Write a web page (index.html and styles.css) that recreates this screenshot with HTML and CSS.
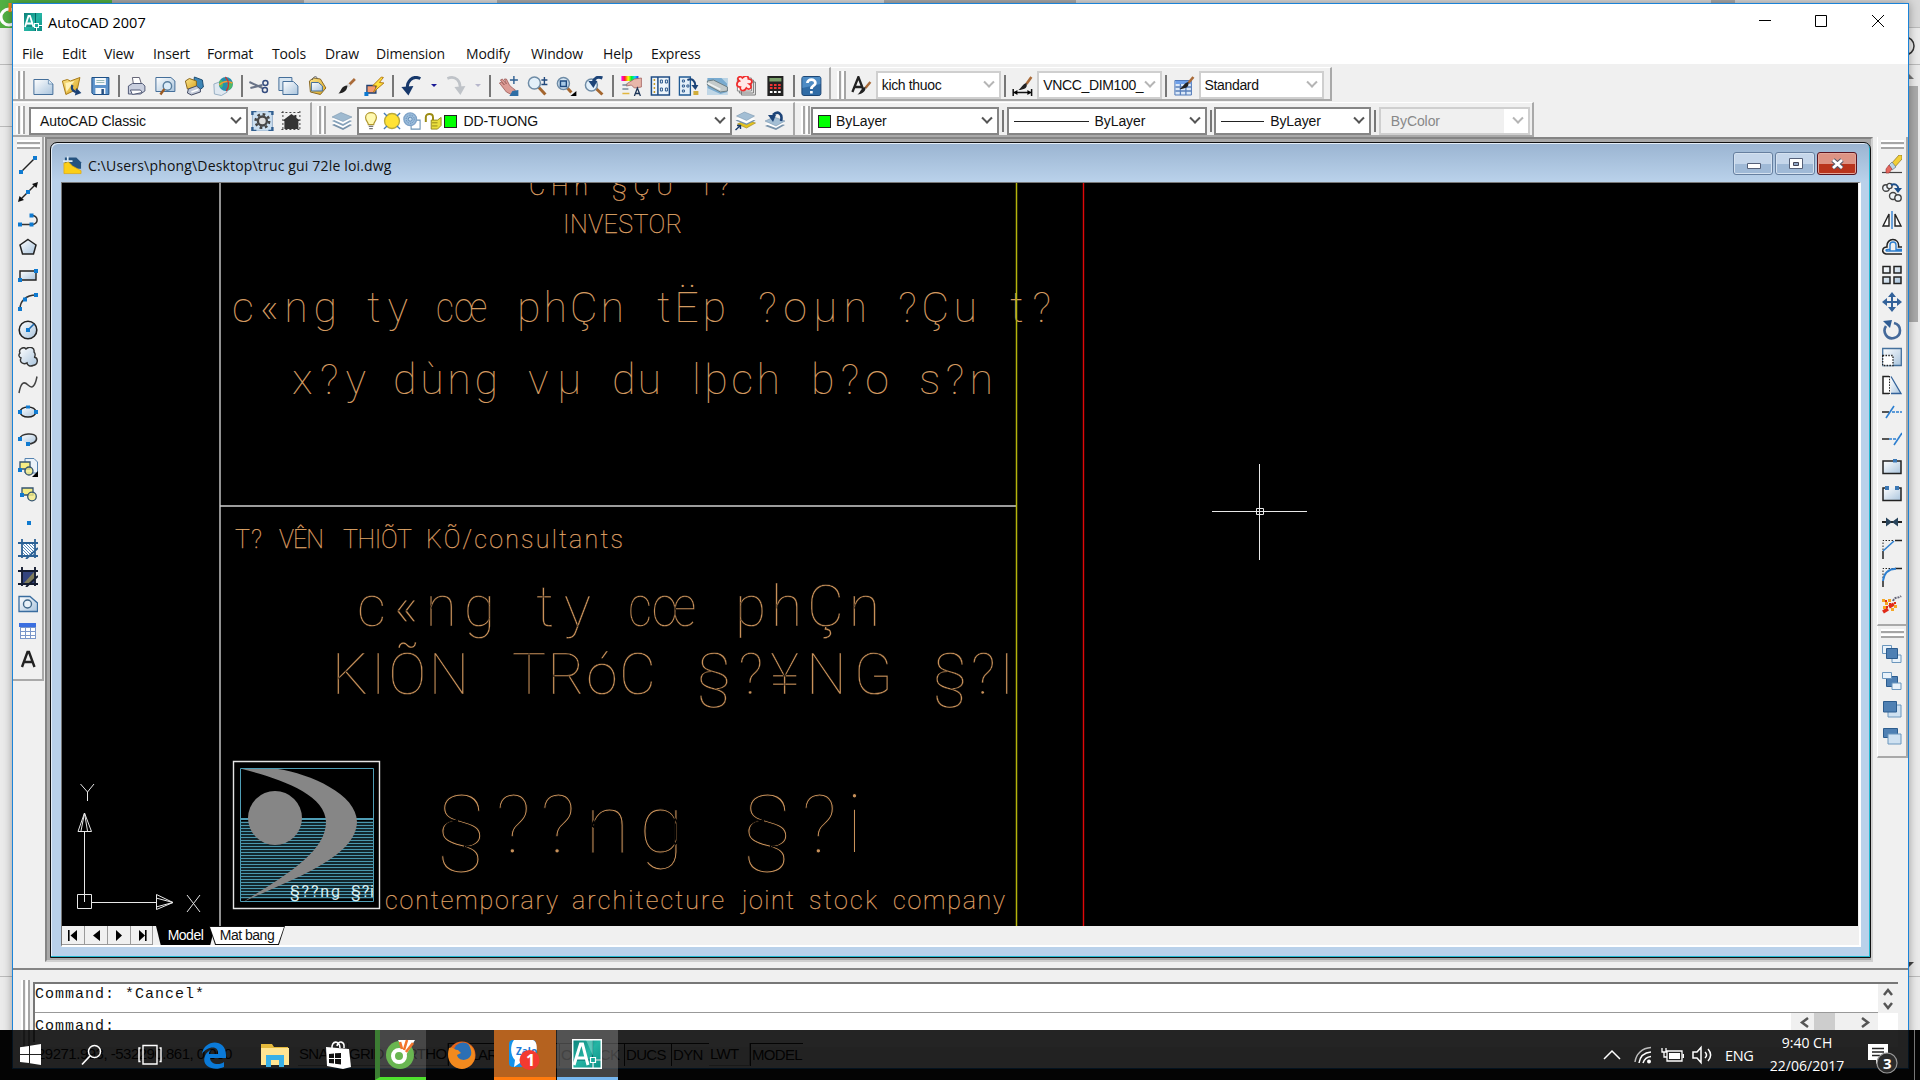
FILE: index.html
```html
<!DOCTYPE html>
<html lang="vi">
<head>
<meta charset="utf-8">
<title>AutoCAD 2007</title>
<link rel="stylesheet" href="styles.css">
</head>
<body>
<svg class="defs" aria-hidden="true">
<defs>
<linearGradient id="g-doc" x1="0" y1="0" x2="1" y2="1"><stop offset="0" stop-color="#fff"/><stop offset="1" stop-color="#a9c4dd"/></linearGradient>
<linearGradient id="g-gold" x1="0" y1="0" x2="1" y2="1"><stop offset="0" stop-color="#fbe48a"/><stop offset="1" stop-color="#d9a520"/></linearGradient>
<linearGradient id="g-teal" x1="0" y1="0" x2="1" y2="1"><stop offset="0" stop-color="#0b7f78"/><stop offset=".5" stop-color="#25b5a4"/><stop offset="1" stop-color="#0d8d84"/></linearGradient>
<linearGradient id="g-rain"><stop offset="0" stop-color="#f0f"/><stop offset=".2" stop-color="#f22"/><stop offset=".4" stop-color="#ff0"/><stop offset=".6" stop-color="#0e3"/><stop offset=".8" stop-color="#0df"/><stop offset="1" stop-color="#22f"/></linearGradient>
<pattern id="p-hatch" width="3" height="3" patternUnits="userSpaceOnUse"><path d="M0 0L3 3" stroke="#4a80b4" stroke-width=".9"/></pattern>
</defs>
<symbol id="acad" viewBox="0 0 18 18"><path fill="url(#g-teal)" d="M0 0h18v18H0z"/><path d="M11.500 0V18M0 13H18" stroke="#055" stroke-width=".8"/><path d="M1 14L4.500 3H6L9.500 14M2.500 10.500H8" fill="none" stroke="#fff" stroke-width="1.800"/><path fill="#1aa698" stroke="#fff" stroke-width="1.100" d="M10.500 10.500h4v4h-4zM14.500 12.500H18M12.500 14.500V18"/></symbol>
<symbol id="acad-big" viewBox="0 0 30 30"><path fill="url(#g-teal)" d="M0 0h30v30H0z"/><path d="M20.500 0V30M0 21H30" stroke="#066" stroke-width="1.200"/><path fill="#7ed8cc" opacity=".6" d="M14 1L21 1V17z"/><path d="M2 26L8.500 5H10.500L16 26M5 19H14" fill="none" stroke="#fff" stroke-width="3"/><path fill="#1aa698" stroke="#fff" stroke-width="1.200" d="M18.500 18.500h5v5h-5zM23.500 21H29M21 23.500V29"/><path fill="none" stroke="#fff" stroke-width="1.500" d="M.7 .7H29.300V29.300H.7z"/></symbol>
<symbol id="new" viewBox="0 0 20 20"><path fill="url(#g-doc)" stroke="#456f9a" d="M.5 3.500H15L19.500 8V18.500H.5z"/><path fill="#dceaf5" stroke="#456f9a" d="M15 3.500V8H19.500" stroke-width=".6"/></symbol>
<symbol id="open" viewBox="0 0 20 20"><path fill="url(#g-gold)" stroke="#a87a18" d="M1 5L6 3.500L9 5L18.500 1.500L16 13L4.500 18.500z"/><path fill="#fff2b8" d="M4 7L13 5L5 16z"/><path fill="none" stroke="#1c4275" stroke-width="2.200" d="M11 9C9 14 13 16 16 16"/><path fill="#1c4275" d="M15 12L20 17L13.500 19.500z"/></symbol>
<symbol id="save" viewBox="0 0 20 20"><path fill="#5c93cb" stroke="#1d4f86" d="M1.500 1.500H18.500V18.500H3L1.500 17z"/><path fill="#f4f8fb" d="M4.500 2H15.500V9H4.500z"/><path stroke="#9bb" d="M6 4.500H14M6 6.500H14"/><path fill="#f4f8fb" d="M5 12H15V18H5z"/><path fill="#234f83" d="M11 13H13.500V18H11z"/></symbol>
<symbol id="print" viewBox="0 0 20 20"><path fill="#fff" stroke="#667" d="M6 1.500H13L15 8H7z"/><path fill="#c9cfdf" stroke="#535b77" d="M2 10L6 7.500H16L18.500 10V15L14 18H2z"/><path fill="#fff" stroke="#535b77" d="M4 14H14L16 16.500L6 18.500z"/></symbol>
<symbol id="preview" viewBox="0 0 20 20"><path fill="url(#g-doc)" stroke="#456f9a" d="M.5 1.500H15.500L19.500 5V15.500H.5z"/><circle cx="12" cy="10" r="4.200" fill="#dcecf8" stroke="#5a7f9f" stroke-width="1.400"/><path d="M9 13L5 18.500" stroke="#9b5a22" stroke-width="2.400"/></symbol>
<symbol id="publish" viewBox="0 0 20 20"><path fill="#3d86b6" stroke="#1f4e75" d="M10 1L18 4L19 11L14 15L9 9z"/><path fill="url(#g-gold)" stroke="#8b671a" d="M1 5L5 2.500L12 5V11L3 13z"/><path fill="#c3cad9" stroke="#464e66" d="M4 13L12 10L16 13V16L7 19L3 17z"/><path stroke="#fff" stroke-width="1.400" d="M7 16L14 13.500"/></symbol>
<symbol id="web" viewBox="0 0 20 20"><path fill="#dfe8f1" stroke="#9ab0c4" d="M.5 8L6 6L14 16L8 19.500L1 18z"/><circle cx="12.500" cy="8" r="7" fill="#258fae"/><path fill="#4fba65" d="M7 4C10 4 11 9 8 12C5 10 5 6 7 4M14 8L19 6C20 11 17 14 14 14z"/><path fill="none" stroke="#f19b31" stroke-width="1.500" d="M6 9C10 5 15 5 19 7"/><path fill="none" stroke="#c33" stroke-width="1.300" d="M12 1C16 5 16 11 13 15"/></symbol>
<symbol id="cut" viewBox="0 0 20 20"><path stroke="#6a7488" stroke-width="2" d="M0 6L13 12M1 12L13 9"/><circle cx="16" cy="7" r="2.500" fill="none" stroke="#354c7e" stroke-width="1.500"/><circle cx="15.500" cy="14" r="2.500" fill="none" stroke="#354c7e" stroke-width="1.500"/></symbol>
<symbol id="copy" viewBox="0 0 20 20"><path fill="#d7e5f1" stroke="#456f9a" d="M.5 1.500H13.500V14.500H.5z"/><path fill="url(#g-doc)" stroke="#456f9a" d="M4.500 5.500H15L19.500 10V18.500H4.500z"/></symbol>
<symbol id="paste" viewBox="0 0 20 20"><path fill="url(#g-gold)" stroke="#8b6a25" d="M2 5L6 2L13 3L18.500 12L13 18.500L3 16z"/><path fill="none" stroke="#666" d="M5 4C6-.5 10 0 10 3"/><path fill="url(#g-doc)" stroke="#456f9a" d="M4 6.500H11L15 10V15H4z"/></symbol>
<symbol id="brush" viewBox="0 0 20 20"><path d="M18.500 3L12 9.500" stroke="#aa6b39" stroke-width="2.800"/><path d="M13 8L10.500 11" stroke="#ddd" stroke-width="3.200"/><path d="M11 9.500C11 14 8 17 2 17.500C5 15 5 9.500 11 9.500" fill="#222"/></symbol>
<symbol id="block" viewBox="0 0 20 20"><path fill="#f59a6e" stroke="#1d3f70" stroke-width="1.300" d="M2.500 9.500H11.500V17H2.500z"/><path fill="#ffe23c" stroke="#b77b14" d="M17 1L8.500 9.500L12.500 10L9 16L19.500 7L15 6.500L19 1.500z"/><path fill="#0a78d0" d="M0 16h4v4H0z"/></symbol>
<symbol id="undo" viewBox="0 0 20 20"><path d="M19 2.500C11-1 5 5 6 14" fill="none" stroke="currentColor" stroke-width="3"/><path fill="currentColor" d="M0 11L12 10L7 19.500z"/></symbol>
<symbol id="redo" viewBox="0 0 20 20"><path d="M1 2.500C9-1 15 5 13.500 14" fill="none" stroke="#bfc3c8" stroke-width="2.600"/><path fill="#bfc3c8" d="M8 11L19 10L14 19z"/></symbol>
<symbol id="pan" viewBox="0 0 20 20"><path fill="#dc9c95" stroke="#9d5a58" stroke-width=".8" d="M1 7L3 6L6 9L2 4L4 3L8 8L6 3L8 3L11 9L14 12L17 14L14 19L8 16z"/><path fill="#2f6ea5" d="M14 15L20 14V20H11z"/><path d="M15.500 0V8M11.500 4H19.500" stroke="#2b5d90" stroke-width="1.400"/></symbol>
<symbol id="zoomrt" viewBox="0 0 20 20"><path d="M11 11L18 18.500" stroke="#a4662f" stroke-width="3"/><circle cx="7" cy="7" r="6" fill="#e3f0fa" stroke="#6f8ca6" stroke-width="1.500"/><path d="M17 1V8M14 4H20M14 8.500H20" stroke="#234a7d" stroke-width="1.400"/></symbol>
<symbol id="zoomwin" viewBox="0 0 20 20"><path d="M10 11L15 16.500" stroke="#a4662f" stroke-width="3"/><circle cx="7" cy="7.500" r="6" fill="#d8e8f5" stroke="#6f8ca6" stroke-width="1.500"/><path fill="#a7c8e4" stroke="#1c4a80" stroke-width="1.500" d="M4 5H10V10.500H4z"/><path d="M20 15V20H14z"/></symbol>
<symbol id="zoomprev" viewBox="0 0 20 20"><path d="M10 11L18 18.500" stroke="#a4662f" stroke-width="3"/><circle cx="7" cy="9" r="6" fill="#e3f0fa" stroke="#6f8ca6" stroke-width="1.500"/><path d="M18 2C13 0 10 2 9 6" fill="none" stroke="#1d4478" stroke-width="3"/><path fill="#1d4478" d="M4 5L13 5L9 12z"/></symbol>
<symbol id="props" viewBox="0 0 20 20"><path fill="url(#g-rain)" d="M0 0h17v5H0z"/><path fill="#e8b7aa" stroke="#a2615d" stroke-width=".8" d="M5 8L13 3L20 2V11L13 12L10 9L5 10z"/><path stroke="#789" stroke-width="1.300" d="M1 9H6M1 13H7"/><path stroke="#e2b63f" stroke-width="1.600" d="M1 17.500H8"/><path d="M13 20L16 12L19 20M14 17.500H18" fill="none" stroke="#1d3557" stroke-width="1.300"/></symbol>
<symbol id="dc" viewBox="0 0 20 20"><path fill="#eef5fb" stroke="#1f4c84" stroke-width="1.500" d="M1 1H19V19H1zM7.500 1V19"/><path stroke="#c79a24" stroke-width="1.500" stroke-dasharray="2 2" d="M4 3V17"/><path fill="#fff" stroke="#2d5a8e" d="M10 4h2v3h-2zM15 4h2v3h-2zM10 12h2v3h-2zM15 12h2v3h-2z"/></symbol>
<symbol id="tool" viewBox="0 0 20 20"><path fill="#e4eff8" stroke="#1f5a94" stroke-width="1.300" d="M1 1H12V19H1z"/><path fill="#fff" stroke="#2d5a8e" d="M4 4h2v2H4zM4 9h2v2H4zM4 14h2v2H4zM8.500 9h2v2h-2z"/><path fill="none" stroke="#1d4478" stroke-width="2" d="M9 4C14 2 17 5 17 10"/><path fill="#1d4478" d="M13 9H20L17 14z"/><path fill="#d1ad3b" d="M15 15h5v4h-5z"/></symbol>
<symbol id="sheet" viewBox="0 0 20 20"><path fill="#79abd0" d="M0 2H20V19H0z"/><path fill="#b9d3e4" d="M0 2H14L20 8V2z"/><path fill="#c3caca" stroke="#6c7e84" d="M0 5L6 4L20 11V15L13 16L0 9z"/><path fill="none" stroke="#eef2f2" stroke-width="1.800" d="M0 7L13 13.500"/><path fill="#dfe9ef" d="M0 12L13 18L20 16V19H0z" opacity=".7"/></symbol>
<symbol id="markup" viewBox="0 0 20 20"><path fill="#eee" stroke="#777" d="M5 6H19V19H5zM3 4H17V17H3z"/><path fill="#fff" stroke="#888" d="M1 2H15V15H1z"/><path fill="#ffe8e8" stroke="#f12b2b" stroke-width="1.700" d="M3 5C-1 2 4-1 6 2C9-1 12-1 12 3C17 3 16 8 13 8C17 11 13 15 10 12C8 16 3 15 4 11C-1 11 0 6 3 5z"/></symbol>
<symbol id="calc" viewBox="0 0 20 20"><path fill="#222" d="M2 0H18V20H2z"/><path fill="#7ba16b" d="M4 2H16V5.500H4z"/><path stroke="#e33" stroke-width="2" stroke-dasharray="2.600 1.500" d="M4.500 9H16M4.500 12H16"/><path stroke="#fff" stroke-width="2" stroke-dasharray="2.600 1.500" d="M4.500 16H16"/></symbol>
<symbol id="help" viewBox="0 0 20 20"><rect x=".5" y=".5" width="19" height="19" rx="2" fill="#2f6ba5" stroke="#1d4674"/><path fill="#4d8bc4" d="M1 1H19V8L1 12z"/><path fill="none" stroke="#fff" stroke-width="2.700" d="M6 7C6 2.500 14 2.500 14 7C14 10 10 9.500 10 13M10 15V17.500"/></symbol>
<symbol id="tstyle" viewBox="0 0 20 20"><path d="M1 16L7 1L12 14M3 11H11" fill="none" stroke="#222" stroke-width="2.300"/><path d="M19 6L14 12" stroke="#aa6b39" stroke-width="2.500"/><path d="M14 11C15 15 11 18 6 18.500C9 17 9 12 14 11" fill="#222"/></symbol>
<symbol id="dstyle" viewBox="0 0 20 20"><path d="M19 1L14 8" stroke="#aa6b39" stroke-width="2.600"/><path d="M14 7C16 12 11 14 6 14C9 12 10 8 14 7" fill="#222"/><path d="M.8 13V20M19.200 13V20M1 16.500H19" stroke="#111" stroke-width="1.500"/><path d="M1 16.500L5 14V19zM19 16.500L15 14V19z"/></symbol>
<symbol id="tbstyle" viewBox="0 0 20 20"><path fill="#dbe8f8" stroke="#4f78b8" d="M.5 4.500H17V19H.5z"/><path fill="#6ea0ea" d="M1 5H17V8H1z"/><path fill="none" stroke="#5a80bb" stroke-width="1.300" d="M1 11H17M1 15H17M6 8V19M11.500 8V19"/><path d="M19 1L14 7" stroke="#aa6b39" stroke-width="2.600"/><path d="M14 6C15 11 11 13 5 13C9 11 9 7 14 6" fill="#222"/></symbol>
<symbol id="gear" viewBox="0 0 20 20"><path fill="#cbdff0" stroke="#7a9abb" stroke-width=".7" d="M0 0h20v20H0z"/><path d="M0 4V0H4M16 0H20V4M20 16V20H16M4 20H0V16" stroke="#315f90" stroke-width="2.400" fill="none"/><circle cx="10" cy="10" r="6.800" fill="none" stroke="#444" stroke-width="2.500" stroke-dasharray="2.700 2.640"/><circle cx="10" cy="10" r="4.500" fill="#ddd" stroke="#484848" stroke-width="2.400"/></symbol>
<symbol id="home" viewBox="0 0 20 20"><path fill="none" stroke="#444" stroke-dasharray="2 2" d="M1.500 0V20M18.500 0V20M0 1.500H20M0 18.500H20"/><path fill="#333" d="M2 9L10 3L13 5V4H15V7L18 9V10H17V18H3V10H2z"/></symbol>
<symbol id="layers" viewBox="0 0 20 20"><path fill="#7893ab" d="M0 14L9 10L20 14L11 19z"/><path fill="#fff" d="M0 12L9 8L20 12L11 17z"/><path fill="#86a2ba" d="M0 10L9 6L20 10L11 15z"/><path fill="#fff" d="M0 8L9 4L20 8L11 13z"/><path fill="#9fbad0" stroke="#6d8ba5" stroke-width=".5" d="M0 6L9 1.500L20 6L11 10.500z"/></symbol>
<symbol id="laycur" viewBox="0 0 20 20"><path fill="#e3c21f" stroke="#9a8218" stroke-width=".6" d="M2 13L11 9L20 12L11 17z"/><path fill="#7893ab" d="M0 9.500L9 6L20 9.500L11 14z"/><path fill="#fff" d="M0 8L9 4L20 8L11 12.500z"/><path fill="#a3bed4" stroke="#6d8ba5" stroke-width=".5" d="M1 5L9 1L19 5L11 9.500z"/><path d="M0 19L5 14.500M1.500 14.500H5V18" fill="none" stroke="#163a6b" stroke-width="1.400"/></symbol>
<symbol id="layprev" viewBox="0 0 20 20"><path fill="#7893ab" d="M0 15L9 11L20 14L11 19z"/><path fill="#fff" d="M0 13L9 9L20 12L11 17z"/><path fill="#a3bed4" stroke="#6d8ba5" stroke-width=".5" d="M0 10L9 6L20 10L11 15z"/><path d="M16 10C18 3 13-1 8 4" fill="none" stroke="#1d4478" stroke-width="2.600"/><path fill="#1d4478" d="M3 4H11L8 11z"/></symbol>
<symbol id="bulb" viewBox="0 0 20 20"><path fill="#fff9b0" stroke="#b0972e" stroke-width="1.300" d="M7 14C7 11 4 10 4 6C4-1 16-1 16 6C16 10 13 11 13 14z"/><path stroke="#777" stroke-width="1.600" d="M7.500 16H12.500M8 18.500H12"/></symbol>
<symbol id="sun" viewBox="0 0 20 20"><circle cx="10" cy="10" r="8.300" fill="#ffe235" stroke="#b9a93a" stroke-width="1.500"/><path d="M1 1l3.500 3.500M19 1l-3.500 3.500M1 19l3.500-3.500M19 19l-3.500-3.500" stroke="#467dba" stroke-width="1.500"/></symbol>
<symbol id="freeze" viewBox="0 0 20 20"><path fill="#fff" stroke="#6c94b5" stroke-width="1.200" d="M9 9H19V19H9z"/><circle cx="8" cy="8" r="7" fill="#9cbddb" stroke="#7fa3c8" stroke-width="1.500"/><circle cx="8" cy="8" r="4.500" fill="none" stroke="#5c87b2" stroke-dasharray="1.500 1.300"/><circle cx="8" cy="8" r="2.200" fill="#c6dcef" stroke="#5c87b2"/></symbol>
<symbol id="lock" viewBox="0 0 20 20"><path fill="none" stroke="#9c8b12" stroke-width="2.200" d="M2 11V6C2 1 10 1 10 6V9"/><path fill="#eadf3e" stroke="#8f8215" d="M8 9H15L19 6V15L15 19H8z"/><path stroke="#8f8215" d="M9 12H15M9 15.500H15"/></symbol>
<symbol id="dwg" viewBox="0 0 20 20"><path fill="#24527f" d="M2 2H14L19 7V14H2z"/><path fill="#fff" d="M5 1V11M0 6H10" stroke="#dbe9f5" stroke-width="1.800"/><path fill="#fbcf18" stroke="#e0a408" stroke-width=".7" d="M1 8L6 7L10 11L19 16V19H1z"/></symbol>

<symbol id="line" viewBox="0 0 20 20"><path d="M3 17L17 3" stroke="#222" stroke-width="1.500"/><path fill="#0f7ad0" d="M1 15h4v4H1zM15 1h4v4h-4z"/></symbol>
<symbol id="xline" viewBox="0 0 20 20"><path d="M2 18L18 2" stroke="#222" stroke-width="1.500"/><path fill="#111" d="M0 20L1.500 14L6 18zM20 0L18.500 6L14 2z"/><path fill="#0f7ad0" d="M8 8h4v4H8z"/></symbol>
<symbol id="pline" viewBox="0 0 20 20"><path d="M2 14.500H14M13 5.500C21 5 21 14.500 14 14.500" fill="none" stroke="#333" stroke-width="1.500"/><path fill="#0f7ad0" d="M0 12.500h4v4H0zM11.500 3.500h4v4h-4zM11.500 12.500h4v4h-4z"/></symbol>
<symbol id="polygon" viewBox="0 0 20 20"><path fill="url(#g-doc)" stroke="#222" stroke-width="1.500" d="M10 2.500L18 8L15.500 17H4.500L2 8z"/></symbol>
<symbol id="rect" viewBox="0 0 20 20"><path fill="url(#g-doc)" stroke="#222" stroke-width="1.400" d="M2 6H18V15H2z"/><path fill="#0f7ad0" d="M0 13h4v4H0zM16 4h4v4h-4z"/></symbol>
<symbol id="arc" viewBox="0 0 20 20"><path d="M2 17C2 9 8 3 18 3" fill="none" stroke="#333" stroke-width="1.600"/><path fill="#0f7ad0" d="M0 15h4v4H0zM5 5.500h4v4H5zM16 1h4v4h-4z"/></symbol>
<symbol id="circle" viewBox="0 0 20 20"><circle cx="10" cy="10" r="8.800" fill="url(#g-doc)" stroke="#222" stroke-width="1.600"/><path d="M10 10L16 4" stroke="#1a67ad" stroke-width="1.600"/><path fill="#0f7ad0" d="M8 8h4v4H8z"/></symbol>
<symbol id="cloud" viewBox="0 0 20 20"><path fill="url(#g-doc)" stroke="#333" stroke-width="1.400" d="M2 6C0 2 6-1 8 2C11-1 17 0 16 5C18 7 17 10 16 10C21 11 20 18 15 18.500C12 20 9 18 9 16C5 18 1 15 3 11C1 10 0 8 2 6z"/></symbol>
<symbol id="spline" viewBox="0 0 20 20"><path d="M1 18C3 7 6 6 10 10S17 12 19 1.500" fill="none" stroke="#444" stroke-width="1.500"/></symbol>
<symbol id="ellipse" viewBox="0 0 20 20"><ellipse cx="10" cy="10" rx="8" ry="5" fill="url(#g-doc)" stroke="#222" stroke-width="1.500"/><path fill="#0f7ad0" d="M0 8h4v4H0zM16 8h4v4h-4zM8 3.500h4v3H8z"/></symbol>
<symbol id="earc" viewBox="0 0 20 20"><path d="M2 10C2 4 18 3 18.500 9C19 13 14 15 10 15" fill="url(#g-doc)" stroke="#333" stroke-width="1.500"/><path fill="#0f7ad0" d="M0 8h4v4H0zM8 13h4v4H8z"/></symbol>
<symbol id="insblk" viewBox="0 0 20 20"><path fill="#eaf2f9" stroke="#5583b0" d="M7 1.500H16L19.500 5V16H7z"/><path fill="#f5ec83" stroke="#33536f" stroke-width="1.300" d="M2 5H12V12H2z"/><circle cx="11" cy="14" r="4" fill="#f5ec83" fill-opacity=".8" stroke="#33536f" stroke-width="1.300"/><path fill="#0f7ad0" d="M0 11h4v4H0z"/><path d="M20 14V20H14z"/></symbol>
<symbol id="mkblk" viewBox="0 0 20 20"><path fill="#f5ec83" stroke="#33536f" stroke-width="1.300" d="M4 4H15V11H4z"/><circle cx="14" cy="12.500" r="4.300" fill="#f5ec83" fill-opacity=".8" stroke="#33536f" stroke-width="1.300"/><path fill="#0f7ad0" d="M2 9h4v4H2z"/></symbol>
<symbol id="point" viewBox="0 0 20 20"><path fill="#0f7ad0" d="M9 9h4v4H9z"/></symbol>
<symbol id="hatch" viewBox="0 0 20 20"><path fill="#fff" d="M4 4H16V16H4z"/><path fill="url(#p-hatch)" d="M4 4H16V16H4z"/><path stroke="#2b6195" stroke-width="1.800" d="M4 0V19M17 0V19M0 4H20M0 17H20M8 20L20 9"/></symbol>
<symbol id="grad" viewBox="0 0 20 20"><path fill="#33447f" d="M4 4H16V16H4z"/><path fill="#b4a445" d="M16 5V12L12 16H6z" opacity=".6"/><path stroke="#141c30" stroke-width="1.900" d="M4 0V19M17 0V19M0 4H20M0 17H20M8 20L20 9"/></symbol>
<symbol id="region" viewBox="0 0 20 20"><path fill="url(#g-doc)" stroke="#3a6d9f" stroke-width="1.300" d="M1 2.500H12L19.500 9V17.500H1z"/><circle cx="9.500" cy="10" r="4" fill="#e8f1f8" stroke="#3f6688" stroke-width="1.400"/></symbol>
<symbol id="table" viewBox="0 0 20 20"><path fill="#7b97c9" d="M2 3H18V18H2z"/><path fill="#3b6fe0" d="M1 2H18V6H1z"/><path fill="#fff" d="M3 7h4v3H3zM8 7h4v3H8zM13 7h4v3h-4zM3 11h4v3H3zM8 11h4v3H8zM13 11h4v3h-4zM3 15h4v2H3zM8 15h4v2H8zM13 15h4v2h-4z"/></symbol>
<symbol id="mtext" viewBox="0 0 20 20"><path d="M4 18L9.500 3H11L16.500 18M6 13H14.500" fill="none" stroke="#222" stroke-width="2.400"/></symbol>

<symbol id="erase" viewBox="0 0 20 20"><path d="M0 17.500H20" stroke="#444" stroke-width="1.200"/><path fill="#f2cf37" stroke="#8a701a" stroke-width=".7" d="M9 9L17 0L20 0V4L12 13z"/><path fill="#bcd5e6" stroke="#567" stroke-width=".6" d="M7 10L10 7L14 12L10 15z"/><path fill="#e5665c" stroke="#933" stroke-width=".6" d="M4 14L7 10L10 14L7 18H4z"/></symbol>
<symbol id="copyo" viewBox="0 0 20 20"><g fill="#eef3f8" stroke="#444" stroke-width="1.400"><circle cx="4" cy="6" r="3.300"/><circle cx="7.500" cy="4" r="2.600"/><circle cx="11" cy="14" r="3.500"/><circle cx="16" cy="16" r="3.200"/></g><path d="M9 3C13 1 16 3 16.500 7" fill="none" stroke="#1c4f8a" stroke-width="2"/><path fill="#1c4f8a" d="M12 6H20L16 11z"/></symbol>
<symbol id="mirror" viewBox="0 0 20 20"><path fill="#fff" stroke="#222" stroke-width="1.400" d="M7 4V16H1zM13 4V16H19z"/><path stroke="#4a90d9" stroke-width="1.600" d="M10 1V19"/></symbol>
<symbol id="offset" viewBox="0 0 20 20"><path fill="none" stroke="#222" stroke-width="1.500" d="M20 17H4C-1 16 0 10 5 10C4 0 18 0 16.500 10H20"/><path fill="none" stroke="#2d7fd0" stroke-width="1.400" d="M20 14H4.500C3 13 5 12 8 12.500V8C8 4 14 4 14 8V12.500H20"/></symbol>
<symbol id="array" viewBox="0 0 20 20"><path fill="url(#g-doc)" stroke="#222" stroke-width="1.500" d="M1 1.500H8V8H1zM12 1.500H19V8H12zM1 12H8V18.500H1zM12 12H19V18.500H12z"/></symbol>
<symbol id="move" viewBox="0 0 20 20"><path stroke="#33629a" stroke-width="2" d="M10 3V17M3 10H17"/><path fill="#33629a" d="M10 0L14 5H6zM10 20L14 15H6zM0 10L5 6V14zM20 10L15 6V14z"/></symbol>
<symbol id="rotate" viewBox="0 0 20 20"><path fill="none" stroke="#44699a" stroke-width="2.600" d="M12 3C20 5 20 16 12 18C5 20 0 12 4 6"/><path fill="#2f5c93" d="M1 1L10 0L8 8z"/></symbol>
<symbol id="scale" viewBox="0 0 20 20"><path fill="url(#g-doc)" stroke="#44709c" stroke-width="1.300" d="M.7 1.500H19.300V18.500H.7z"/><path fill="#fff" stroke="#222" stroke-width="1.300" stroke-dasharray="1.500 1.300" d="M.7 8.500H11V18.500H.7z"/></symbol>
<symbol id="stretch" viewBox="0 0 20 20"><path fill="url(#g-doc)" stroke="#33629a" stroke-width="1.300" d="M9 1.500L19 18.500H9"/><path fill="#fff" stroke="#222" stroke-width="1.500" d="M7 1.500H1V18.500H7"/><path stroke="#222" stroke-dasharray="1.500 1.300" d="M7.500 1V19"/></symbol>
<symbol id="trim" viewBox="0 0 20 20"><path d="M0 10H7" stroke="#222" stroke-width="1.500"/><path d="M10 10H20" stroke="#2d7fd0" stroke-width="1.300" stroke-dasharray="3 1"/><path d="M4 16L12 4" stroke="#2d7fd0" stroke-width="1.600"/></symbol>
<symbol id="extend" viewBox="0 0 20 20"><path d="M0 10H7" stroke="#222" stroke-width="1.500"/><path d="M7 10H14" stroke="#2d7fd0" stroke-width="1.300" stroke-dasharray="3 1"/><path d="M12 16L20 4" stroke="#2d7fd0" stroke-width="1.600"/></symbol>
<symbol id="brkpt" viewBox="0 0 20 20"><path fill="url(#g-doc)" stroke="#222" stroke-width="1.500" d="M1 4H19V16.500H1z"/><path fill="#3a77b4" d="M11 2h4v3.500h-4z"/></symbol>
<symbol id="brk" viewBox="0 0 20 20"><path fill="url(#g-doc)" d="M1 4H19V16.500H1z"/><path fill="none" stroke="#222" stroke-width="1.500" d="M5 4H1V16.500H19V4H16"/><path fill="#3a77b4" d="M3 2h4v4H3zM13 2h4v4h-4z"/></symbol>
<symbol id="join" viewBox="0 0 20 20"><path d="M0 10H20" stroke="#222" stroke-width="2"/><path fill="#28445c" d="M10 10L4 5.500V14.500zM10 10L16 5.500V14.500z"/></symbol>
<symbol id="chamfer" viewBox="0 0 20 20"><path d="M1 20V12M13 1.500H20" stroke="#222" stroke-width="1.500"/><path d="M1 11V1.500H12" fill="none" stroke="#222" stroke-dasharray="1.500 1.500"/><path d="M1 12L12 2" stroke="#2d7fd0" stroke-width="1.600"/></symbol>
<symbol id="fillet" viewBox="0 0 20 20"><path d="M1 20V14M13 1.500H20" stroke="#222" stroke-width="1.500"/><path d="M1 11V1.500H12" fill="none" stroke="#222" stroke-dasharray="1.500 1.500"/><path d="M1 14C2 6 6 2 14 1.800" fill="none" stroke="#2d7fd0" stroke-width="1.900"/></symbol>
<symbol id="explode" viewBox="0 0 20 20"><path d="M11 7C13 2 16 5 19 2" stroke="#667" stroke-dasharray="2 1" fill="none" stroke-width="2"/><path d="M1 18L6 15" stroke="#e02a18" stroke-width="3.500"/><path d="M7 13L12 10" stroke="#e02a18" stroke-width="3.500"/><path d="M0 5h3v3H0zM6 5h3v3H6zM3 8h3v3H3zM1 12h3v3H1zM9 14h3v3H9zM12 11h3v3h-3z" fill="#f5a623"/><path d="M3 6h2v2H3zM7 9h2v2H7zM4 12h2v2H4zM12 8h2v2h-2z" fill="#e02a18"/></symbol>
<symbol id="front" viewBox="0 0 20 20"><path fill="#e9f2fa" stroke="#6b96bd" d="M.5 1.500h9v8h-9zM10 11h9v7.500h-9z"/><path fill="#4f80b3" stroke="#2c5c8e" d="M4.500 4.500h11v10h-11z"/></symbol>
<symbol id="back" viewBox="0 0 20 20"><path fill="#4f80b3" stroke="#2c5c8e" d="M4.500 5.500h11v10h-11z"/><path fill="#e9f2fa" stroke="#6b96bd" d="M.5 1.500h9v6h-9zM10 12h9v6.500h-9z"/></symbol>
<symbol id="above" viewBox="0 0 20 20"><path fill="#cfe1f1" stroke="#6b96bd" d="M6 6h13v12H6z"/><path fill="#4f80b3" stroke="#2c5c8e" d="M1.500 2.500h13v10.500h-13z"/></symbol>
<symbol id="under" viewBox="0 0 20 20"><path fill="#4f80b3" stroke="#2c5c8e" d="M1.500 2.500h14v9h-14z"/><path fill="#cfe1f1" stroke="#6b96bd" d="M6 8h13v10H6z"/></symbol>
</svg>

<div class="backdrop">
  <div class="back-tab"></div>
  <svg class="back-bits" width="1920" height="1080">
    <path fill="#aaa" d="M112 0H304V3H112zM497 0H690V3H497zM884 0H1076V3H884zM1711 0H1735V3H1711z"/>
    <circle cx="9" cy="17" r="8" fill="none" stroke="#fff" stroke-width="3"/><path d="M10 3V12" stroke="#f58220" stroke-width="3"/>
    <path stroke="#bbb" d="M0 64.500H12M1909 27.500H1920M1909 64.500H1920M0 126.500H12M0 976.500H12M1909 976.500H1920"/>
    <circle cx="1905" cy="46" r="9" fill="none" stroke="#333" stroke-width="1.500"/>
    <path fill="#777" d="M1909 74L1914 79H1909z"/><path fill="#aaa" d="M1909 86H1918V322H1909z"/><path fill="#444" d="M1909 962H1914L1909 967z"/>
  </svg>
</div>

<main class="window">
  <header class="titlebar">
    <svg class="app-icon"><use href="#acad"/></svg><span class="app-title">AutoCAD 2007</span>
    <svg class="caption" width="126" height="14"><path fill="none" stroke="#000" d="M0 5.500H12M56.500 .5H67.500V11.500H56.500zM113 0L125 12M125 0L113 12"/></svg>
  </header>
  <nav class="menubar"><span>File</span><span>Edit</span><span>View</span><span>Insert</span><span>Format</span><span>Tools</span><span>Draw</span><span>Dimension</span><span>Modify</span><span>Window</span><span>Help</span><span>Express</span></nav>

  <div class="toolrow row-one">
    <section class="bar bar-standard">
      <i class="grip"></i>
      <svg class="ic"><use href="#new"/></svg><svg class="ic"><use href="#open"/></svg><svg class="ic"><use href="#save"/></svg><i class="sep"></i>
      <svg class="ic"><use href="#print"/></svg><svg class="ic"><use href="#preview"/></svg><svg class="ic"><use href="#publish"/></svg><svg class="ic"><use href="#web"/></svg><i class="sep"></i>
      <svg class="ic"><use href="#cut"/></svg><svg class="ic"><use href="#copy"/></svg><svg class="ic"><use href="#paste"/></svg><svg class="ic"><use href="#brush"/></svg><svg class="ic"><use href="#block"/></svg><i class="sep"></i>
      <svg class="ic navy"><use href="#undo"/></svg><i class="drop"></i><svg class="ic"><use href="#redo"/></svg><i class="drop off"></i><i class="sep"></i>
      <svg class="ic"><use href="#pan"/></svg><svg class="ic"><use href="#zoomrt"/></svg><svg class="ic"><use href="#zoomwin"/></svg><svg class="ic"><use href="#zoomprev"/></svg><i class="sep"></i>
      <svg class="ic"><use href="#props"/></svg><svg class="ic"><use href="#dc"/></svg><svg class="ic"><use href="#tool"/></svg><svg class="ic"><use href="#sheet"/></svg><svg class="ic"><use href="#markup"/></svg><svg class="ic"><use href="#calc"/></svg><i class="sep"></i>
      <svg class="ic"><use href="#help"/></svg>
    </section>
    <section class="bar bar-styles">
      <i class="grip"></i>
      <svg class="ic"><use href="#tstyle"/></svg><div class="combo pale"><span>kich thuoc</span><i class="chev"></i></div><i class="sep"></i>
      <svg class="ic"><use href="#dstyle"/></svg><div class="combo pale"><span>VNCC_DIM100_</span><i class="chev"></i></div><i class="sep"></i>
      <svg class="ic"><use href="#tbstyle"/></svg><div class="combo pale"><span>Standard</span><i class="chev"></i></div>
    </section>
  </div>
  <div class="toolrow row-two">
    <section class="bar bar-workspace">
      <i class="grip"></i><div class="combo"><span>AutoCAD Classic</span><i class="chev"></i></div>
      <svg class="ic"><use href="#gear"/></svg><svg class="ic"><use href="#home"/></svg>
    </section>
    <section class="bar bar-layers">
      <i class="grip"></i><svg class="ic"><use href="#layers"/></svg>
      <div class="combo"><svg class="mini"><use href="#bulb"/></svg><svg class="mini"><use href="#sun"/></svg><svg class="mini"><use href="#freeze"/></svg><svg class="mini"><use href="#lock"/></svg><b class="swatch"></b><span>DD-TUONG</span><i class="chev"></i></div>
      <svg class="ic"><use href="#laycur"/></svg><svg class="ic"><use href="#layprev"/></svg>
    </section>
    <section class="bar bar-props">
      <i class="grip"></i>
      <div class="combo c-color"><b class="swatch"></b><span>ByLayer</span><i class="chev"></i></div><i class="sep"></i>
      <div class="combo c-type"><b class="rule"></b><span>ByLayer</span><i class="chev"></i></div><i class="sep"></i>
      <div class="combo c-weight"><b class="rule"></b><span>ByLayer</span><i class="chev"></i></div><i class="sep"></i>
      <div class="combo c-plot pale"><span>ByColor</span><i class="chev"></i></div>
    </section>
  </div>

  <div class="workarea">
    <aside class="side side-left">
      <i class="hgrip"></i>
      <svg><use href="#line"/></svg><svg><use href="#xline"/></svg><svg><use href="#pline"/></svg><svg><use href="#polygon"/></svg><svg><use href="#rect"/></svg><svg><use href="#arc"/></svg><svg><use href="#circle"/></svg><svg><use href="#cloud"/></svg><svg><use href="#spline"/></svg><svg><use href="#ellipse"/></svg><svg><use href="#earc"/></svg><svg><use href="#insblk"/></svg><svg><use href="#mkblk"/></svg><svg><use href="#point"/></svg><svg><use href="#hatch"/></svg><svg><use href="#grad"/></svg><svg><use href="#region"/></svg><svg><use href="#table"/></svg><svg><use href="#mtext"/></svg>
    </aside>
    <div class="mdi">
      <div class="doc">
        <div class="doc-title">
          <svg class="doc-icon"><use href="#dwg"/></svg><span>C:\Users\phong\Desktop\truc gui 72le loi.dwg</span>
          <div class="doc-buttons">
            <svg width="40" height="23"><path class="glyph" d="M13.500 10.500h13v5h-13z"/></svg>
            <svg width="40" height="23"><path class="glyph" d="M13.500 5.500h13v10h-13z"/><path fill="#8fa6c4" stroke="#445" d="M17.500 9.500h5v3h-5z"/></svg>
            <svg class="close" width="40" height="23"><path d="M15 7L24 15M24 7L15 15" stroke="#555a6a" stroke-width="5"/><path d="M15 7L24 15M24 7L15 15" stroke="#fff" stroke-width="2.800"/></svg>
          </div>
        </div>
        <div class="doc-body">
          <svg class="drawing" width="1796" height="743" viewBox="62 183 1796 743">
            <path fill="none" stroke="#cfcfcf" stroke-width="1.400" d="M220 183V926M220 506H1016"/>
            <path stroke="#e00808" stroke-width="1.400" d="M1083.500 183V926"/>
            <g class="cad s25">
              <text x="529" y="194.500" textLength="59">CHñ</text><text x="612" y="194.500" textLength="61">§ÇU</text><text x="699" y="194.500" textLength="30">T?</text>
              <text x="563" y="233" textLength="119">INVESTOR</text>
              <text x="235" y="548" textLength="27">T?</text><text x="279" y="548" textLength="45">VÊN</text><text x="343" y="548" textLength="69">THIÕT</text><text x="426" y="548" textLength="197">KÕ/consultants</text>
              <text x="385" y="909" textLength="173">contemporary</text><text x="572" y="909" textLength="152">architecture</text><text x="742" y="909" textLength="52">joint</text><text x="809" y="909" textLength="68">stock</text><text x="893" y="909" textLength="112">company</text>
            </g>
            <g class="cad s44">
              <text x="232" y="322" textLength="105">c«ng</text><text x="367" y="322" textLength="41">ty</text><text x="436" y="322" textLength="51" lengthAdjust="spacingAndGlyphs">cœ</text><text x="517" y="322" textLength="107">phÇn</text><text x="657" y="322" textLength="69">tËp</text><text x="758" y="322" textLength="109">?oµn</text><text x="898" y="322" textLength="79">?Çu</text><text x="1010" y="322" textLength="41">t?</text>
              <text x="292" y="394" textLength="74">x?y</text><text x="393" y="394" textLength="105">dùng</text><text x="528" y="394" textLength="53">vµ</text><text x="612" y="394" textLength="49">du</text><text x="692" y="394" textLength="88">lþch</text><text x="811" y="394" textLength="78">b?o</text><text x="919" y="394" textLength="74">s?n</text>
            </g>
            <g class="cad s58">
              <text x="357" y="625.500" textLength="138">c«ng</text><text x="536" y="625.500" textLength="55">ty</text><text x="628" y="625.500" textLength="68" lengthAdjust="spacingAndGlyphs">cœ</text><text x="735" y="625.500" textLength="145">phÇn</text>
              <text x="332" y="694" textLength="137">KIÕN</text><text x="512" y="694" textLength="144">TRóC</text><text x="697" y="694" textLength="196">§?¥NG</text><text x="933" y="694" textLength="81">§?I</text>
            </g>
            <g class="cad s82">
              <text x="437" y="853" textLength="247">§??ng</text><text x="743" y="853" textLength="120">§?i</text>
            </g>
            <path stroke="#b4b40c" stroke-width="1.500" d="M1016.500 183V926"/>
            <g fill="none" stroke="#e4e4e4">
              <path stroke-width="1.400" d="M233.500 761.500H379.500V908.500H233.500z"/>
              <path stroke="#4f9db5" d="M240.500 768.500H373.500V901.500H240.500z"/>
              <path stroke="#4f9db5" stroke-width="2" d="M240 819H374"/>
              <path stroke="#4a97ae" stroke-width="1.300" d="M240 822.500H374M240 825.500H374M240 828.500H374M240 831.500H374M240 834.500H374M240 837.500H374M240 840.500H374M240 843.500H374M240 846.500H374M240 849.500H374M240 852.500H374M240 855.500H374M240 858.500H374M240 861.500H374M240 864.500H374M240 867.500H374M240 870.500H374M240 873.500H374M240 876.500H374M240 879.500H374M240 882.500H374M240 885.500H374M240 888.500H374M240 891.500H374M240 894.500H374M240 897.500H374"/>
            </g>
            <circle cx="275" cy="818" r="27" fill="#868686"/>
            <path fill="#868686" d="M242 769H278C310 774 357 794 357 822C356 858 290 880 243 902C285 876 326 852 326 822C326 794 278 778 242 769z"/>
            <g class="cad logo-text"><text x="290" y="897" textLength="50">§??ng</text><text x="351" y="897" textLength="23">§?i</text></g>
            <g fill="none" stroke="#e8e8e8">
              <path d="M77.500 894.500H91.500V908.500H77.500zM84.500 902V831M78 831.500H91.500L84.500 813zM81 831L84.500 813L87.500 831M91 902.500H156M156.500 894.500V909.500L173 902.500zM156 898L173 902.500L156 907"/>
              <path d="M80.500 784L87.500 792L94 784M87.500 792V801M187 895L200 912M200 895L187 912"/>
              <path d="M1212 511.500H1307M1259.500 464V560M1256.500 508.500H1263.500V514.500H1256.500z"/>
            </g>
          </svg>
          <div class="tabs">
            <svg width="91" height="19"><path fill="none" stroke="#9a9a9a" d="M22.500 0V19M45.500 0V19M68.500 0V19M90.500 0V19M0 18.500H91"/><path d="M6 4h1.600v11H6zM15 4V15L8.500 9.500zM38 4V15L31 9.500zM54 4V15L60 9.500zM77 4V15L83 9.500zM83 4h1.600v11H83z"/></svg>
            <div class="tab active"><span>Model</span></div><div class="tab"><span>Mat bang</span></div>
          </div>
        </div>
      </div>
    </div>
    <aside class="side side-right">
      <div class="group">
        <i class="hgrip"></i>
        <svg><use href="#erase"/></svg><svg><use href="#copyo"/></svg><svg><use href="#mirror"/></svg><svg><use href="#offset"/></svg><svg><use href="#array"/></svg><svg><use href="#move"/></svg><svg><use href="#rotate"/></svg><svg><use href="#scale"/></svg><svg><use href="#stretch"/></svg><svg><use href="#trim"/></svg><svg><use href="#extend"/></svg><svg><use href="#brkpt"/></svg><svg><use href="#brk"/></svg><svg><use href="#join"/></svg><svg><use href="#chamfer"/></svg><svg><use href="#fillet"/></svg><svg><use href="#explode"/></svg>
      </div>
      <div class="group">
        <i class="hgrip"></i>
        <svg><use href="#front"/></svg><svg><use href="#back"/></svg><svg><use href="#above"/></svg><svg><use href="#under"/></svg>
      </div>
    </aside>
  </div>

  <div class="command">
    <i class="grip"></i>
    <div class="cmd-box">
      <div class="cmd-history"><span>Command: *Cancel*</span><svg width="20" height="29"><path fill="none" stroke="#555" stroke-width="2.500" d="M6 11L10 6L14 11M6 19L10 24L14 19"/></svg></div>
      <div class="cmd-line"><span>Command:</span><svg width="87" height="17"><path fill="#cdcdcd" d="M23 0H44V17H23z"/><path fill="none" stroke="#555" stroke-width="2.500" d="M17 5L11 9.500L17 14M71 5L77 9.500L71 14"/></svg></div>
    </div>
  </div>
  <footer class="statusbar"><span class="coords">29271.993, -532290.861, 0.000</span><span class="w49 up">SNAP</span><span class="w47 up">GRID</span><span class="w52 up">ORTHO</span><span class="w52">POLAR</span><span class="w58">OSNAP</span><span class="w65">OTRACK</span><span class="w47">DUCS</span><span class="w37">DYN</span><span class="w41 up">LWT</span><span class="w53">MODEL</span></footer>
</main>

<div class="taskbar">
  <div class="task"><svg width="22" height="22"><path fill="#fff" d="M0 3.200L9 2V10H0zM10 1.800L21 0V10H10zM0 11H9V19L0 18zM10 11H21V21L10 19.300z"/></svg></div>
  <div class="task"><svg width="22" height="22"><circle cx="13.500" cy="7.500" r="6" fill="none" stroke="#fff" stroke-width="1.500"/><path d="M9 12L1 20.500" stroke="#fff" stroke-width="1.700"/></svg></div>
  <div class="task tview"><svg width="24" height="22"><path fill="none" stroke="#fff" stroke-width="1.400" d="M5 1.500H19V20H5zM2.500 4H1V17.500H2.500M21.500 4H23V17.500H21.500"/></svg></div>
  <div class="task"><svg width="26" height="27"><path fill="#0b7ad8" d="M1 12C3-3 25-4 25 13V16H9C9 22 18 24 23 20V25C12 30 0 24 4 14C6 9 10 8 10 8C8 9 8 11 8 12H17C18 3 6 4 1 12z"/></svg></div>
  <div class="task"><svg width="28" height="26"><path fill="#e5b93c" d="M0 2H11L13 5H27V23H0z"/><path fill="#ffe593" d="M0 6H28V23H0z"/><path fill="#38b0e8" d="M5 13H23V25H18V18H10V25H5z"/></svg></div>
  <div class="task store"><svg width="28" height="30"><path fill="none" stroke="#fff" stroke-width="1.600" d="M7 9C6 0 15 0 15 8M12 6C13 0 20 1 19 8"/><path fill="#fff" d="M1 7L24 9L26 27L18 29L2 26z"/><path fill="#111" d="M4 14L9 13.500V18H4zM10 13.300L16 13V18H10zM4 19H9V23.500L4 23zM10 19H16V24.500L10 23.700z"/></svg></div>
  <div class="task open coc"><svg width="30" height="30"><circle cx="14" cy="16" r="14" fill="#69b651"/><circle cx="13" cy="17" r="6" fill="none" stroke="#fff" stroke-width="4"/><path fill="#fff" d="M12 1H29L20 16z"/><path d="M14 3L16 10M21 1L18 11M27 4L20 13" stroke="#f2742b" stroke-width="2.600"/></svg></div>
  <div class="task"><svg width="28" height="28"><circle cx="14" cy="14" r="13.500" fill="#e8641b"/><circle cx="15" cy="11" r="9.500" fill="#2b6fb5"/><path fill="#f28a1e" d="M1 7C5 5 6 9 10 9L13 12L9 14C10 20 20 21 23 14C24 10 22 5 20 3C30 8 30 26 14 28C2 27-2 17 1 7z"/></svg></div>
  <div class="task open zalo"><svg width="34" height="32"><rect x="1" y="2" width="27" height="27" rx="4" fill="#1392ea"/><path fill="#fff" d="M6 2H25C30 4 29 12 28 18C26 25 18 26 12 25L6 29L7 22C2 17 2 7 6 2z"/><text x="8" y="17" font-size="10" font-weight="bold" fill="#1a78d6">Zalo</text><circle cx="21.500" cy="22" r="10" fill="#f33a30"/><text x="18" y="28" font-size="16" font-weight="bold" fill="#fff">1</text></svg></div>
  <div class="task open cad-task"><svg width="30" height="30"><use href="#acad-big"/></svg></div>
  <div class="tray">
    <svg width="110" height="22"><g fill="none" stroke="#fff" stroke-width="1.500"><path d="M1 15L9 7L17 15"/><path d="M32 18C33 10 39 4 48 3.500" opacity=".7"/><path d="M36 19C37 13 41 8.500 48 8M40 19C41 16 43.500 13 48 12.500"/><path d="M90 8H94L98 3.500V18.500L94 14H90zM102 8C104 10 104 12 102 14M105 5C108.500 9 108.500 13 105 17"/><path d="M64 7H79V17H64zM59 4V8H63V4M61 8V13H64" stroke-width="1.300"/></g><path fill="#fff" d="M66 9H77V15H66zM79.500 10H81V14H79.500z"/><circle cx="46" cy="17.500" r="2" fill="#fff"/></svg>
    <span class="lang">ENG</span>
    <div class="clock"><span>9:40 CH</span><span>22/06/2017</span></div>
    <svg class="notes" width="32" height="34"><path fill="#fff" d="M1 2H21V18H14L9 22V18H1z"/><path stroke="#222" stroke-width="1.400" d="M5 6.500H17M5 10H17M5 13.500H13"/><circle cx="20" cy="21" r="10" fill="#2c2c2c" stroke="#999" stroke-width="1.200"/><text x="16" y="26.500" font-size="15" font-weight="bold" fill="#fff">3</text></svg>
    <i class="peek"></i>
  </div>
</div>
</body>
</html>
```
FILE: styles.css
```css
* { box-sizing: border-box; }
html, body { margin: 0; width: 1920px; height: 1080px; overflow: hidden; }
body { position: relative; font-family: "Open Sans", "Noto Sans", sans-serif; color: #111; }
i { font-style: normal; }
.defs { position: absolute; width: 0; height: 0; }

.backdrop { position: absolute; inset: 0; background: linear-gradient(#d9d9d9 0 28px, #ebebeb 28px 1030px, #222 1030px); }
.back-tab { width: 112px; height: 28px; background: #52b043; }
.back-bits { position: absolute; inset: 0; }

.window { position: absolute; left: 12px; top: 3px; width: 1897px; height: 1066px; border: 1px solid #1b83d8; background: #f0f0f0; display: flex; flex-direction: column; box-shadow: 0 0 9px rgba(0,0,0,.35); }
.titlebar { height: 35px; background: #fff; display: flex; align-items: center; padding: 1px 24px 0 11px; flex: none; }
.app-icon { width: 18px; height: 18px; }
.app-title { font-size: 14.500px; margin-left: 6px; color: #000; }
.caption { margin-left: auto; margin-right: -1px; }
.menubar { height: 25px; background: #fff; display: flex; flex: none; padding-left: 9px; font-size: 14px; line-height: 30px; letter-spacing: -.15px; white-space: nowrap; }
.menubar span:nth-child(1) { width: 40px; }
.menubar span:nth-child(2) { width: 42px; }
.menubar span:nth-child(3) { width: 49px; }
.menubar span:nth-child(4) { width: 54px; }
.menubar span:nth-child(5) { width: 65px; }
.menubar span:nth-child(6) { width: 53px; }
.menubar span:nth-child(7) { width: 51px; }
.menubar span:nth-child(8) { width: 90px; }
.menubar span:nth-child(9) { width: 65px; }
.menubar span:nth-child(10) { width: 72px; }
.menubar span:nth-child(11) { width: 48px; }

.toolrow { display: flex; flex: none; height: 35px; }
.row-one { margin-top: 3px; }
.bar { height: 34px; display: flex; align-items: center; border-top: 1px solid #fff; border-bottom: 2px solid #a9a9a9; border-right: 2px solid #a9a9a9; font-family: "Liberation Sans", sans-serif; font-size: 14px; letter-spacing: -.1px; padding-top: 4px; }
.row-two .bar { height: 35px; }
.bar-standard { width: 818px; padding-left: 3px; }
.bar-styles { width: 501px; padding-left: 6px; }
.bar-workspace { width: 299px; padding-left: 3px; }
.bar-layers { width: 483px; padding-left: 5px; }
.bar-props { width: 739px; padding-left: 6px; }
.grip { width: 9px; height: 28px; flex: none; border: solid #a5a5a5; border-width: 0 2px 0 0; background: linear-gradient(90deg, #fff 0 2px, #a5a5a5 2px 4px, #f0f0f0 4px 5px, #fff 5px); margin-top: -2px; }
.ic { width: 28.800px; height: 20px; flex: none; }
.bar-standard .grip { margin-right: 3.500px; }
.navy { color: #17386b; }
.sep { width: 7.600px; height: 22px; flex: none; background: linear-gradient(90deg, transparent 3px, #777 3px 5px, transparent 5px); }
.drop { width: 16px; flex: none; display: flex; justify-content: center; }
.drop::before { content: ""; border: 3.500px solid transparent; border-top-color: #1a1a96; border-bottom: 0; }
.drop.off::before { border-top-color: #b7b7cc; }

.combo { height: 28px; flex: none; background: #fff; border: 2px solid #858585; display: flex; align-items: center; padding-left: 10px; white-space: nowrap; }
.combo.pale { border-color: #cfcfcf; }
.chev { margin-left: auto; flex: none; width: 8px; height: 8px; border: solid #555; border-width: 0 2px 2px 0; transform: rotate(45deg) translate(-2px, -2px); margin-right: 6px; }
.pale .chev { border-color: #b5b5b5; }
.bar-styles .grip { margin-right: 1px; }
.bar-styles .combo { width: 125px; padding-left: 4px; margin-top: -1px; }
.bar-styles .combo span { letter-spacing: -.35px; }
.bar-workspace .combo { width: 219px; margin: 0 0 0 4px; padding-left: 9px; }
.bar-layers .ic { margin-left: 2px; width: 28px; }
.bar-layers .combo { width: 375px; padding-left: 3px; gap: 2.500px; margin-left: 1px; }
.bar-layers .combo + .ic { margin-left: 0; width: 27px; }
.bar-layers .combo span { margin-left: 4px; }
.mini { width: 18px; height: 18px; flex: none; }
.swatch { width: 13px; height: 13px; background: #0f0; border: 1px solid #222; flex: none; }
.c-color { width: 188px; margin-left: 1px; padding-left: 5px; gap: 5px; }
.c-type { width: 200px; padding-left: 5px; gap: 6px; }
.c-weight { width: 157px; padding-left: 5px; gap: 6px; }
.c-plot { width: 151px; background: linear-gradient(90deg, #f0f0f0 123px, #fff 123px); color: #888; }
.rule { height: 1px; background: #222; }
.c-type .rule { width: 75px; }
.c-weight .rule { width: 43px; }

.workarea { display: flex; height: 826px; flex: none; }
.side svg { display: block; width: 20px; height: 20px; margin-bottom: 7.450px; }
.hgrip { display: block; height: 9px; border: solid #a5a5a5; border-width: 0 0 2px; background: linear-gradient(#fff 0 2px, #a5a5a5 2px 4px, #f0f0f0 4px 5px, #fff 5px); }
.side-left { width: 31px; height: 544px; padding: 3px 2px 0 4px; border-right: 2px solid #a9a9a9; border-bottom: 2px solid #a9a9a9; }
.side-left svg { margin-left: 1px; }
.side-left .hgrip, .side-right .hgrip { margin-bottom: 6px; }
.side-right { flex: 1; padding-left: 4px; }
.side-right .group { width: 31px; padding: 3px 2px 0 3px; border: solid #a9a9a9; border-left-color: #fff; border-width: 0 2px 2px 1px; }
.side-right .group:first-child { height: 489px; }
.side-right .group:last-child { height: 132px; }
.side-right svg { margin-left: 1px; }

.mdi { width: 1829px; height: 825px; margin-left: 1px; background: #a9a9a9; border: 2px solid #848484; border-right-color: #d0d0d0; border-bottom-color: #d0d0d0; padding: 3px 0 0 3px; }
.doc { width: 1821px; height: 816px; border: 1px solid #111; border-radius: 7px 7px 0 0; background: linear-gradient(#9ab4d1 0, #b9d1ea 38px, #b9d1ea 100%); box-shadow: inset -1px -1px 0 #22b8d0, inset 1px 1px 0 #e4eef8; padding-left: 10px; }
.doc-title { height: 39px; display: flex; align-items: center; padding-top: 6px; padding-right: 13px; font-family: "Open Sans", sans-serif; font-size: 14px; letter-spacing: .17px; }
.doc-icon { width: 19px; height: 20px; margin: -2px 6px 0 2px; }
.doc-buttons { margin-left: auto; display: flex; gap: 2px; margin-top: -5px; }
.doc-buttons svg { border: 1px solid #667f9f; border-radius: 3px; background: linear-gradient(#c5d6ea 50%, #9fb9d6 50%); box-shadow: inset 0 0 0 1px #d5e2f0; }
.doc-buttons .close { border-color: #5a1420; background: linear-gradient(#dd9384 50%, #b9341c 50%); box-shadow: inset 0 0 0 1px #e4a699; }
.glyph { fill: #fff; stroke: #556078; }
.doc-body { width: 1800px; height: 765px; border: 1px solid #777; border-right: 2px solid #fff; border-bottom: 2px solid #fff; background: #f0f0f0; }
.drawing { display: block; background: #000; font-family: "Roboto", "Lato", sans-serif; }
.cad { fill: #d39a60; font-weight: 100; }
.s25 { font-size: 25px; fill: #e0a568; stroke: #e0a568; stroke-width: .25px; }
.s44 { font-size: 43px; }
.s58 { font-size: 57px; fill: #c8915a; stroke: #000; stroke-width: .3px; }
.s82 { font-size: 82px; fill: #c8915a; stroke: #000; stroke-width: 1.100px; }
.logo-text { fill: #d8eef2; font-size: 16px; font-weight: 400; }

.tabs { display: flex; height: 19px; font-family: "Liberation Sans", sans-serif; font-size: 14px; letter-spacing: -.5px; }
.tab { height: 19px; margin-left: -6px; width: 76px; padding: 1px; background: #111; clip-path: polygon(0 0, 100% 0, 92% 100%, 8% 100%); }
.tab span { display: block; height: 17px; line-height: 17px; text-align: center; background: #fff; clip-path: polygon(0 0, 100% 0, 92% 100%, 8% 100%); }
.tab.active { width: 59px; margin-left: 3px; background: #000; }
.tab.active span { background: #000; color: #fff; }

.command { display: flex; margin-top: 5px; height: 70px; flex: none; border-top: 2px solid #858585; padding: 12px 10px 0 9px; }
.command .grip { height: 70px; margin: -2px 3px 0 -1px; }
.cmd-box { flex: 1; border-left: 2px solid #777; border-top: 2px solid #777; height: 60px; font-family: "Liberation Mono", monospace; font-size: 15px; letter-spacing: 1px; }
.cmd-history { height: 29px; background: #fff; border-bottom: 1px solid #999; display: flex; justify-content: space-between; line-height: 22px; }
.cmd-history svg { background: #f0f0f0; }
.cmd-line { height: 34px; display: flex; justify-content: space-between; background: #fff; line-height: 27px; }
.cmd-line svg { background: #f0f0f0; margin-right: 20px; }
.statusbar { display: flex; position: relative; font-family: "Liberation Sans", sans-serif; font-size: 15px; padding-left: 23px; margin-top: 5px; height: 24px; letter-spacing: -.7px; white-space: nowrap; }
.statusbar span { flex: none; line-height: 22px; height: 23px; padding-left: 1px; border: solid #222; border-width: 1px 0 0 1px; }
.statusbar .up { border-color: #aaa; border-width: 0 1px 1px 0; }
.statusbar .coords { width: 262px; border: 0; letter-spacing: -.5px; }
.w37 { width: 38px; } .w41 { width: 41px; } .w47 { width: 47px; } .w49 { width: 50px; } .w52 { width: 53px; } .w53 { width: 53px; } .w58 { width: 58px; } .w65 { width: 65px; }

.taskbar { position: absolute; left: 0; top: 1030px; width: 1920px; height: 50px; background: rgba(0,0,0,.86); display: flex; color: #fff; }
.task { width: 61.200px; height: 50px; display: flex; align-items: center; justify-content: center; flex: none; }
.task.open { background: rgba(255,255,255,.16); border-bottom: 3px solid #4fe02e; }
.task.tview { padding-right: 5px; }
.task.store { padding-left: 4px; }
.task.coc { width: 51px; margin: 0 5px 0 8px; border-left: 5px solid #3c7d33; padding-right: 5px; }
.task.zalo { background: #b5621f; border-bottom-color: #ff7b0e; margin: 0 1px 0 2px; }
.task.cad-task { background: rgba(130,130,130,.5); border-bottom-color: #76b6ee; }
.tray { margin-left: auto; display: flex; align-items: center; height: 50px; font-size: 14.500px; }
.lang { margin-left: 12px; width: 43px; letter-spacing: -.3px; }
.clock { width: 78px; display: flex; flex-direction: column; align-items: center; line-height: 23px; margin-top: -2px; font-size: 14px; letter-spacing: 0; }
.notes { margin: 7px 0 0 21px; }
.peek { width: 1px; height: 50px; background: #777; margin: 0 5px 0 15px; }
```
